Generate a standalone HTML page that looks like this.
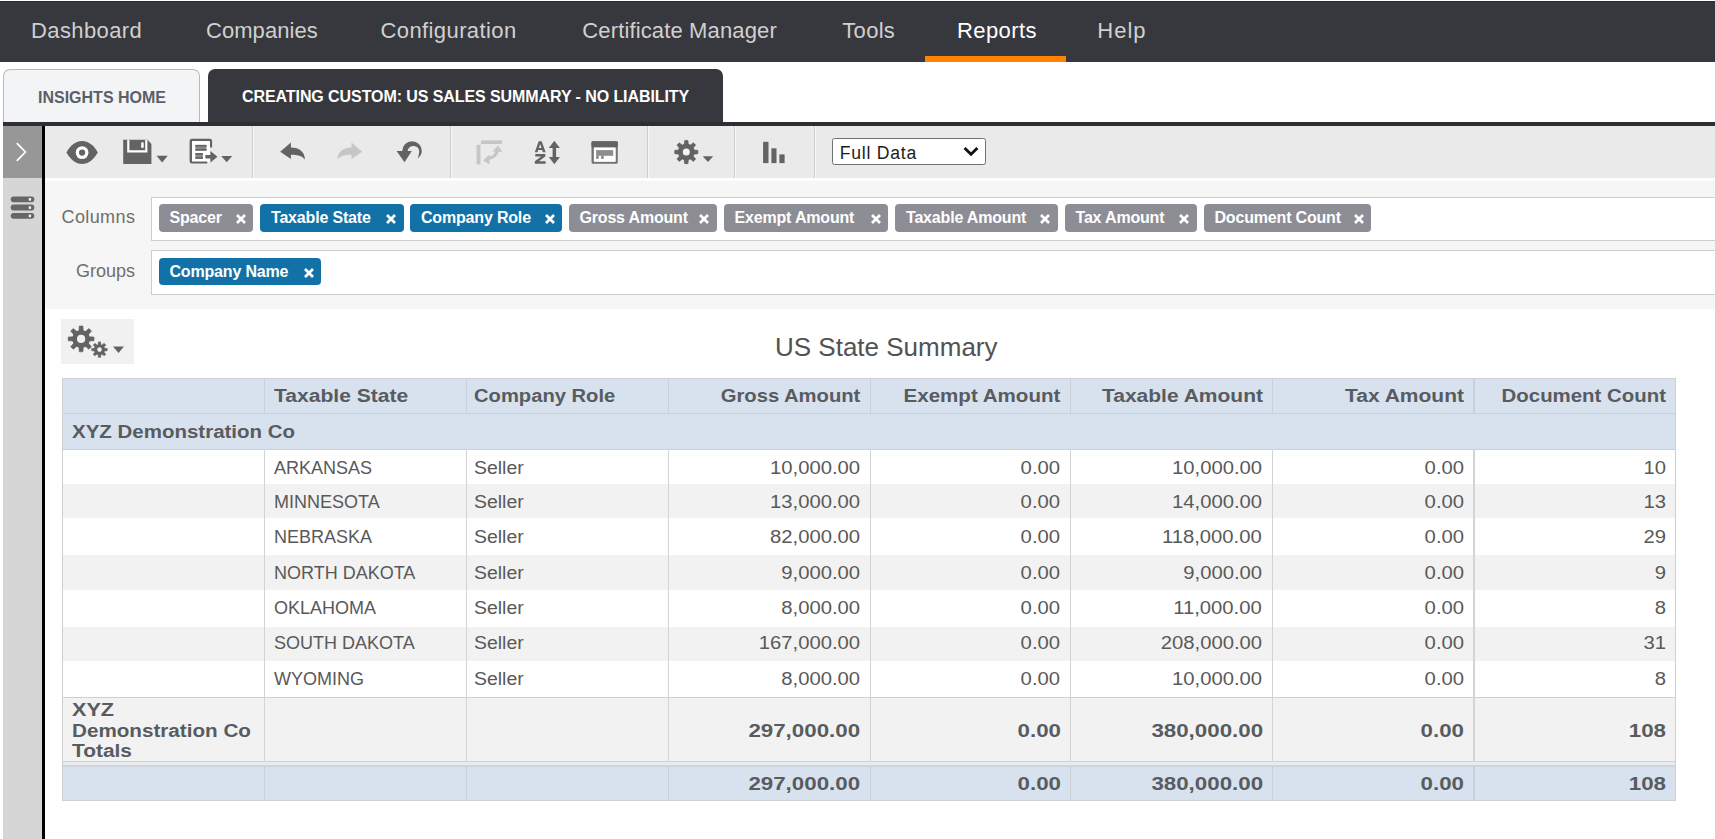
<!DOCTYPE html>
<html><head><meta charset="utf-8">
<style>
*{margin:0;padding:0;box-sizing:border-box}
html,body{width:1715px;height:839px;overflow:hidden;background:#fff;font-family:"Liberation Sans",sans-serif}
.a{position:absolute}
#nav{left:0;top:1px;width:1715px;height:61px;background:#37383d;border-top:1px solid #2a2b2f}
.ni{position:absolute;top:18px;font-size:22px;color:#d0d0d0;white-space:nowrap;line-height:26px;letter-spacing:0.4px}
#orange{left:925px;top:56px;width:141px;height:6px;background:#fe8204}
.tab{position:absolute;top:69px;height:54px;border-radius:7px 7px 0 0;white-space:nowrap;font-weight:bold;font-size:16px;line-height:20px}
#tab1{left:3px;width:197px;background:#f3f4f6;border:1.4px solid #b9b9b9;border-bottom:none;color:#5b5e68}
#tab2{left:208px;width:515px;background:#37383d;color:#fff;letter-spacing:-0.08px}
#darkbar{left:3px;top:122px;width:1712px;height:4px;background:#2e2f33}
#sbtop{left:3px;top:126px;width:39px;height:52px;background:#979797}
#sbbot{left:3px;top:178px;width:39px;height:661px;background:#d6d6d6}
#blk{left:42px;top:126px;width:3px;height:713px;background:#000}
#tool{left:45px;top:126px;width:1670px;height:52px;background:#eaeaea}
.sep{position:absolute;top:126px;width:1px;height:52px;background:#cdcdcd}
#filt{left:45px;top:178px;width:1670px;height:131px;background:#f6f6f6;border-top:3px solid #fff}
.lbl{position:absolute;font-size:18px;color:#6e6e6e;white-space:nowrap;line-height:20px}
.box{position:absolute;left:150.5px;width:1570px;background:#fff;border:1.2px solid #cdcdcd}
.chip{position:absolute;top:204px;height:27.6px;border-radius:4px;color:#fff;font-weight:bold;font-size:16px;letter-spacing:-0.18px;line-height:28.8px;white-space:nowrap;padding-left:11px}
.g{background:#8d8d95}.b{background:#1271a6}
.chip svg{position:absolute;top:10px}
#gearbtn{left:61px;top:319px;width:73px;height:45px;background:#f1f1f1}
#title{left:775px;top:331px;font-size:26px;color:#525252;white-space:nowrap;line-height:32px}
table{position:absolute;left:62px;top:378px;border-collapse:collapse;table-layout:fixed}
td,th{border:1px solid #cfd3d7;font-size:18px;color:#4e4e4e;white-space:nowrap;padding:0 9px;overflow:hidden}
th{font-weight:bold;color:#50555c;background:#d9e3ee;letter-spacing:1.3px;height:35px}
.r{text-align:right}
.l{text-align:left}
.num{letter-spacing:1.1px}
.t{position:absolute;white-space:nowrap;font-size:18px;line-height:20px}
.hb{font-weight:bold;color:#585b60}
.rg{color:#595959}
</style></head><body>
<div id="nav" class="a"></div>
<div class="ni" style="left:31px">Dashboard</div>
<div class="ni" style="left:206px;letter-spacing:0.05px">Companies</div>
<div class="ni" style="left:380.5px">Configuration</div>
<div class="ni" style="left:582.3px;letter-spacing:0.14px">Certificate Manager</div>
<div class="ni" style="left:842.3px;letter-spacing:0.3px">Tools</div>
<div class="ni" style="left:957px;color:#fff">Reports</div>
<div class="ni" style="left:1097.3px;letter-spacing:1px">Help</div>
<div id="orange" class="a"></div>

<div id="tab1" class="tab"><span class="a" style="left:34px;top:18px">INSIGHTS HOME</span></div>
<div id="tab2" class="tab"><span class="a" style="left:34px;top:18px">CREATING CUSTOM: US SALES SUMMARY - NO LIABILITY</span></div>
<div id="darkbar" class="a"></div>
<div id="sbtop" class="a"></div>
<div id="sbbot" class="a"></div>
<div id="blk" class="a"></div>
<div id="tool" class="a"></div>
<div class="sep" style="left:252px"></div>
<div class="sep" style="left:450px"></div>
<div class="sep" style="left:647px"></div>
<div class="sep" style="left:734px"></div>
<div class="sep" style="left:814px"></div>
<div id="filt" class="a"></div>
<div class="lbl" style="left:61.5px;top:207px;letter-spacing:0.4px">Columns</div>
<div class="lbl" style="left:76px;top:261px">Groups</div>
<div class="box" style="top:197px;height:44px"></div>
<div class="box" style="top:250px;height:45px"></div>

<div id="gearbtn" class="a"></div>
<div id="title" class="a">US State Summary</div>
<div class="a" style="left:62px;top:378px;width:1613.2px;height:71px;background:#d7e2ee;"></div>
<div class="a" style="left:62px;top:449px;width:1613.2px;height:35px;background:#ffffff;"></div>
<div class="a" style="left:62px;top:484px;width:1613.2px;height:34.299999999999955px;background:#f2f2f2;"></div>
<div class="a" style="left:62px;top:518.3px;width:1613.2px;height:36.700000000000045px;background:#ffffff;"></div>
<div class="a" style="left:62px;top:555px;width:1613.2px;height:34.5px;background:#f2f2f2;"></div>
<div class="a" style="left:62px;top:589.5px;width:1613.2px;height:37.0px;background:#ffffff;"></div>
<div class="a" style="left:62px;top:626.5px;width:1613.2px;height:34.5px;background:#f2f2f2;"></div>
<div class="a" style="left:62px;top:661px;width:1613.2px;height:36.39999999999998px;background:#ffffff;"></div>
<div class="a" style="left:62px;top:697.4px;width:1613.2px;height:64.10000000000002px;background:#f2f2f2;"></div>
<div class="a" style="left:62px;top:762px;width:1613.2px;height:3.3999999999999773px;background:#e8ecf0;"></div>
<div class="a" style="left:62px;top:765.4px;width:1613.2px;height:35.10000000000002px;background:#d7e2ee;"></div>
<div class="a" style="left:62px;top:378px;width:1613.2px;height:1.2px;background:#cdd1d6;"></div>
<div class="a" style="left:62px;top:412.8px;width:1613.2px;height:1.2px;background:#cdd1d6;"></div>
<div class="a" style="left:62px;top:448.8px;width:1613.2px;height:1.2px;background:#cdd1d6;"></div>
<div class="a" style="left:62px;top:697.2px;width:1613.2px;height:1.2px;background:#cdd1d6;"></div>
<div class="a" style="left:62px;top:761.2px;width:1613.2px;height:1.2px;background:#cdd1d6;"></div>
<div class="a" style="left:62px;top:800px;width:1613.2px;height:1.2px;background:#cdd1d6;"></div>
<div class="a" style="left:62px;top:765.4px;width:1613.2px;height:2px;background:#ced4da;"></div>
<div class="a" style="left:62px;top:378px;width:1.2px;height:422.5px;background:#cdd1d6;"></div>
<div class="a" style="left:263.5px;top:378px;width:1.2px;height:35px;background:#c9d0d8;"></div>
<div class="a" style="left:263.5px;top:449px;width:1.2px;height:312.5px;background:#d4d4d4;"></div>
<div class="a" style="left:263.5px;top:766.5px;width:1.2px;height:34.0px;background:#c9d0d8;"></div>
<div class="a" style="left:466px;top:378px;width:1.2px;height:35px;background:#c9d0d8;"></div>
<div class="a" style="left:466px;top:449px;width:1.2px;height:312.5px;background:#d4d4d4;"></div>
<div class="a" style="left:466px;top:766.5px;width:1.2px;height:34.0px;background:#c9d0d8;"></div>
<div class="a" style="left:668px;top:378px;width:1.2px;height:35px;background:#c9d0d8;"></div>
<div class="a" style="left:668px;top:449px;width:1.2px;height:312.5px;background:#d4d4d4;"></div>
<div class="a" style="left:668px;top:766.5px;width:1.2px;height:34.0px;background:#c9d0d8;"></div>
<div class="a" style="left:869.5px;top:378px;width:1.2px;height:35px;background:#c9d0d8;"></div>
<div class="a" style="left:869.5px;top:449px;width:1.2px;height:312.5px;background:#d4d4d4;"></div>
<div class="a" style="left:869.5px;top:766.5px;width:1.2px;height:34.0px;background:#c9d0d8;"></div>
<div class="a" style="left:1069.6px;top:378px;width:1.2px;height:35px;background:#c9d0d8;"></div>
<div class="a" style="left:1069.6px;top:449px;width:1.2px;height:312.5px;background:#d4d4d4;"></div>
<div class="a" style="left:1069.6px;top:766.5px;width:1.2px;height:34.0px;background:#c9d0d8;"></div>
<div class="a" style="left:1271.6px;top:378px;width:1.2px;height:35px;background:#c9d0d8;"></div>
<div class="a" style="left:1271.6px;top:449px;width:1.2px;height:312.5px;background:#d4d4d4;"></div>
<div class="a" style="left:1271.6px;top:766.5px;width:1.2px;height:34.0px;background:#c9d0d8;"></div>
<div class="a" style="left:1473.4px;top:378px;width:1.2px;height:35px;background:#c9d0d8;"></div>
<div class="a" style="left:1473.4px;top:449px;width:1.2px;height:312.5px;background:#d4d4d4;"></div>
<div class="a" style="left:1473.4px;top:766.5px;width:1.2px;height:34.0px;background:#c9d0d8;"></div>
<div class="a" style="left:1675.2px;top:378px;width:1.2px;height:422.5px;background:#cdd1d6;"></div>
<div class="t hb" style="left:274.0px;top:386.3px;transform:scaleX(1.171);transform-origin:left">Taxable State</div>
<div class="t hb" style="left:474.3px;top:386.3px;transform:scaleX(1.121);transform-origin:left">Company Role</div>
<div class="t hb" style="right:854.5px;top:386.3px;transform:scaleX(1.123);transform-origin:right">Gross Amount</div>
<div class="t hb" style="right:654.4000000000001px;top:386.3px;transform:scaleX(1.142);transform-origin:right">Exempt Amount</div>
<div class="t hb" style="right:452.4000000000001px;top:386.3px;transform:scaleX(1.167);transform-origin:right">Taxable Amount</div>
<div class="t hb" style="right:250.5999999999999px;top:386.3px;transform:scaleX(1.167);transform-origin:right">Tax Amount</div>
<div class="t hb" style="right:48.799999999999955px;top:386.3px;transform:scaleX(1.134);transform-origin:right">Document Count</div>
<div class="t hb" style="left:71.5px;top:421.7px;transform:scaleX(1.138);transform-origin:left">XYZ Demonstration Co</div>
<div class="t rg" style="left:274.0px;top:457.7px">ARKANSAS</div>
<div class="t rg" style="left:474.3px;top:457.7px;transform:scaleX(1.08);transform-origin:left">Seller</div>
<div class="t rg" style="right:855.0px;top:457.7px;transform:scaleX(1.125);transform-origin:right">10,000.00</div>
<div class="t rg" style="right:654.9000000000001px;top:457.7px;transform:scaleX(1.125);transform-origin:right">0.00</div>
<div class="t rg" style="right:452.9000000000001px;top:457.7px;transform:scaleX(1.125);transform-origin:right">10,000.00</div>
<div class="t rg" style="right:251.0999999999999px;top:457.7px;transform:scaleX(1.125);transform-origin:right">0.00</div>
<div class="t rg" style="right:49.299999999999955px;top:457.7px;transform:scaleX(1.125);transform-origin:right">10</div>
<div class="t rg" style="left:274.0px;top:491.5px">MINNESOTA</div>
<div class="t rg" style="left:474.3px;top:491.5px;transform:scaleX(1.08);transform-origin:left">Seller</div>
<div class="t rg" style="right:855.0px;top:491.5px;transform:scaleX(1.125);transform-origin:right">13,000.00</div>
<div class="t rg" style="right:654.9000000000001px;top:491.5px;transform:scaleX(1.125);transform-origin:right">0.00</div>
<div class="t rg" style="right:452.9000000000001px;top:491.5px;transform:scaleX(1.125);transform-origin:right">14,000.00</div>
<div class="t rg" style="right:251.0999999999999px;top:491.5px;transform:scaleX(1.125);transform-origin:right">0.00</div>
<div class="t rg" style="right:49.299999999999955px;top:491.5px;transform:scaleX(1.125);transform-origin:right">13</div>
<div class="t rg" style="left:274.0px;top:526.7px">NEBRASKA</div>
<div class="t rg" style="left:474.3px;top:526.7px;transform:scaleX(1.08);transform-origin:left">Seller</div>
<div class="t rg" style="right:855.0px;top:526.7px;transform:scaleX(1.125);transform-origin:right">82,000.00</div>
<div class="t rg" style="right:654.9000000000001px;top:526.7px;transform:scaleX(1.125);transform-origin:right">0.00</div>
<div class="t rg" style="right:452.9000000000001px;top:526.7px;transform:scaleX(1.125);transform-origin:right">118,000.00</div>
<div class="t rg" style="right:251.0999999999999px;top:526.7px;transform:scaleX(1.125);transform-origin:right">0.00</div>
<div class="t rg" style="right:49.299999999999955px;top:526.7px;transform:scaleX(1.125);transform-origin:right">29</div>
<div class="t rg" style="left:274.0px;top:562.5px">NORTH DAKOTA</div>
<div class="t rg" style="left:474.3px;top:562.5px;transform:scaleX(1.08);transform-origin:left">Seller</div>
<div class="t rg" style="right:855.0px;top:562.5px;transform:scaleX(1.125);transform-origin:right">9,000.00</div>
<div class="t rg" style="right:654.9000000000001px;top:562.5px;transform:scaleX(1.125);transform-origin:right">0.00</div>
<div class="t rg" style="right:452.9000000000001px;top:562.5px;transform:scaleX(1.125);transform-origin:right">9,000.00</div>
<div class="t rg" style="right:251.0999999999999px;top:562.5px;transform:scaleX(1.125);transform-origin:right">0.00</div>
<div class="t rg" style="right:49.299999999999955px;top:562.5px;transform:scaleX(1.125);transform-origin:right">9</div>
<div class="t rg" style="left:274.0px;top:598.2px">OKLAHOMA</div>
<div class="t rg" style="left:474.3px;top:598.2px;transform:scaleX(1.08);transform-origin:left">Seller</div>
<div class="t rg" style="right:855.0px;top:598.2px;transform:scaleX(1.125);transform-origin:right">8,000.00</div>
<div class="t rg" style="right:654.9000000000001px;top:598.2px;transform:scaleX(1.125);transform-origin:right">0.00</div>
<div class="t rg" style="right:452.9000000000001px;top:598.2px;transform:scaleX(1.125);transform-origin:right">11,000.00</div>
<div class="t rg" style="right:251.0999999999999px;top:598.2px;transform:scaleX(1.125);transform-origin:right">0.00</div>
<div class="t rg" style="right:49.299999999999955px;top:598.2px;transform:scaleX(1.125);transform-origin:right">8</div>
<div class="t rg" style="left:274.0px;top:633.45px">SOUTH DAKOTA</div>
<div class="t rg" style="left:474.3px;top:633.45px;transform:scaleX(1.08);transform-origin:left">Seller</div>
<div class="t rg" style="right:855.0px;top:633.45px;transform:scaleX(1.125);transform-origin:right">167,000.00</div>
<div class="t rg" style="right:654.9000000000001px;top:633.45px;transform:scaleX(1.125);transform-origin:right">0.00</div>
<div class="t rg" style="right:452.9000000000001px;top:633.45px;transform:scaleX(1.125);transform-origin:right">208,000.00</div>
<div class="t rg" style="right:251.0999999999999px;top:633.45px;transform:scaleX(1.125);transform-origin:right">0.00</div>
<div class="t rg" style="right:49.299999999999955px;top:633.45px;transform:scaleX(1.125);transform-origin:right">31</div>
<div class="t rg" style="left:274.0px;top:669.2px">WYOMING</div>
<div class="t rg" style="left:474.3px;top:669.2px;transform:scaleX(1.08);transform-origin:left">Seller</div>
<div class="t rg" style="right:855.0px;top:669.2px;transform:scaleX(1.125);transform-origin:right">8,000.00</div>
<div class="t rg" style="right:654.9000000000001px;top:669.2px;transform:scaleX(1.125);transform-origin:right">0.00</div>
<div class="t rg" style="right:452.9000000000001px;top:669.2px;transform:scaleX(1.125);transform-origin:right">10,000.00</div>
<div class="t rg" style="right:251.0999999999999px;top:669.2px;transform:scaleX(1.125);transform-origin:right">0.00</div>
<div class="t rg" style="right:49.299999999999955px;top:669.2px;transform:scaleX(1.125);transform-origin:right">8</div>
<div class="t hb" style="left:71.5px;top:699.7px;transform:scaleX(1.2);transform-origin:left">XYZ</div>
<div class="t hb" style="left:71.5px;top:720.7px;transform:scaleX(1.147);transform-origin:left">Demonstration Co</div>
<div class="t hb" style="left:71.5px;top:741.2px;transform:scaleX(1.16);transform-origin:left">Totals</div>
<div class="t hb" style="right:854.5px;top:720.6px;transform:scaleX(1.24);transform-origin:right">297,000.00</div>
<div class="t hb" style="right:854.5px;top:774.1px;transform:scaleX(1.24);transform-origin:right">297,000.00</div>
<div class="t hb" style="right:654.4000000000001px;top:720.6px;transform:scaleX(1.24);transform-origin:right">0.00</div>
<div class="t hb" style="right:654.4000000000001px;top:774.1px;transform:scaleX(1.24);transform-origin:right">0.00</div>
<div class="t hb" style="right:452.4000000000001px;top:720.6px;transform:scaleX(1.24);transform-origin:right">380,000.00</div>
<div class="t hb" style="right:452.4000000000001px;top:774.1px;transform:scaleX(1.24);transform-origin:right">380,000.00</div>
<div class="t hb" style="right:250.5999999999999px;top:720.6px;transform:scaleX(1.24);transform-origin:right">0.00</div>
<div class="t hb" style="right:250.5999999999999px;top:774.1px;transform:scaleX(1.24);transform-origin:right">0.00</div>
<div class="t hb" style="right:48.799999999999955px;top:720.6px;transform:scaleX(1.24);transform-origin:right">108</div>
<div class="t hb" style="right:48.799999999999955px;top:774.1px;transform:scaleX(1.24);transform-origin:right">108</div>
<div class="chip g" style="left:158.5px;top:204.1px;width:94.5px">Spacer<svg width="10" height="10" viewBox="0 0 10 10" style="position:absolute;right:7.5px;top:10.3px"><path d="M1 1L9 9M9 1L1 9" stroke="#fff" stroke-width="2.7" stroke-linecap="butt"/></svg></div>
<div class="chip b" style="left:260px;top:204.1px;width:143.5px">Taxable State<svg width="10" height="10" viewBox="0 0 10 10" style="position:absolute;right:7.5px;top:10.3px"><path d="M1 1L9 9M9 1L1 9" stroke="#fff" stroke-width="2.7" stroke-linecap="butt"/></svg></div>
<div class="chip b" style="left:410px;top:204.1px;width:152px">Company Role<svg width="10" height="10" viewBox="0 0 10 10" style="position:absolute;right:7.5px;top:10.3px"><path d="M1 1L9 9M9 1L1 9" stroke="#fff" stroke-width="2.7" stroke-linecap="butt"/></svg></div>
<div class="chip g" style="left:568.5px;top:204.1px;width:148.0px">Gross Amount<svg width="10" height="10" viewBox="0 0 10 10" style="position:absolute;right:7.5px;top:10.3px"><path d="M1 1L9 9M9 1L1 9" stroke="#fff" stroke-width="2.7" stroke-linecap="butt"/></svg></div>
<div class="chip g" style="left:723.5px;top:204.1px;width:164.5px">Exempt Amount<svg width="10" height="10" viewBox="0 0 10 10" style="position:absolute;right:7.5px;top:10.3px"><path d="M1 1L9 9M9 1L1 9" stroke="#fff" stroke-width="2.7" stroke-linecap="butt"/></svg></div>
<div class="chip g" style="left:895px;top:204.1px;width:162.5px">Taxable Amount<svg width="10" height="10" viewBox="0 0 10 10" style="position:absolute;right:7.5px;top:10.3px"><path d="M1 1L9 9M9 1L1 9" stroke="#fff" stroke-width="2.7" stroke-linecap="butt"/></svg></div>
<div class="chip g" style="left:1064.5px;top:204.1px;width:132.0px">Tax Amount<svg width="10" height="10" viewBox="0 0 10 10" style="position:absolute;right:7.5px;top:10.3px"><path d="M1 1L9 9M9 1L1 9" stroke="#fff" stroke-width="2.7" stroke-linecap="butt"/></svg></div>
<div class="chip g" style="left:1203.5px;top:204.1px;width:167.5px">Document Count<svg width="10" height="10" viewBox="0 0 10 10" style="position:absolute;right:7.5px;top:10.3px"><path d="M1 1L9 9M9 1L1 9" stroke="#fff" stroke-width="2.7" stroke-linecap="butt"/></svg></div>
<div class="chip b" style="left:158.5px;top:257.7px;width:162.5px">Company Name<svg width="10" height="10" viewBox="0 0 10 10" style="position:absolute;right:7.5px;top:10.3px"><path d="M1 1L9 9M9 1L1 9" stroke="#fff" stroke-width="2.7" stroke-linecap="butt"/></svg></div>
<svg class="a" style="left:0;top:0" width="1715" height="839" viewBox="0 0 1715 839">
<rect x="253" y="126" width="1" height="52" fill="#f7f7f7"/>
<rect x="451" y="126" width="1" height="52" fill="#f7f7f7"/>
<rect x="648" y="126" width="1" height="52" fill="#f7f7f7"/>
<rect x="735" y="126" width="1" height="52" fill="#f7f7f7"/>
<rect x="815" y="126" width="1" height="52" fill="#f7f7f7"/>
<path d="M16.8 143.2 L25.4 152 L16.8 160.8" fill="none" stroke="#fff" stroke-width="1.7"/>
<rect x="10.7" y="196.4" width="23.6" height="5.8" rx="2.9" fill="#666"/>
<rect x="28.7" y="198.0" width="2.4" height="2.7" rx="0.6" fill="#f0f0f0"/>
<rect x="10.7" y="204.6" width="23.6" height="5.8" rx="2.9" fill="#666"/>
<rect x="28.7" y="206.2" width="2.4" height="2.7" rx="0.6" fill="#f0f0f0"/>
<rect x="10.7" y="212.9" width="23.6" height="5.8" rx="2.9" fill="#666"/>
<rect x="28.7" y="214.5" width="2.4" height="2.7" rx="0.6" fill="#f0f0f0"/>
<path d="M66.4 152.5 C70.5 145.2 76 141.1 82.1 141.1 C88.2 141.1 93.7 145.2 97.8 152.5 C93.7 159.8 88.2 163.9 82.1 163.9 C76 163.9 70.5 159.8 66.4 152.5 Z" fill="#636363"/>
<circle cx="82.1" cy="152.6" r="6.4" fill="#fff"/>
<circle cx="82.1" cy="152.6" r="3.1" fill="#636363"/>
<path d="M123.2 139.8 L147.6 139.8 L151.4 144 L151.4 163.9 L123.2 163.9 Z" fill="#636363"/>
<path d="M127.2 139.8 L129.4 139.8 L129.4 150.2 L145.2 150.2 L145.2 139.8 L147.4 139.8 L147.4 152.4 L127.2 152.4 Z" fill="#fff"/>
<rect x="141.2" y="142.4" width="2.5" height="5.4" fill="#fff"/>
<path d="M156.5 155.8 L167.8 155.8 L162.15 162.6 Z" fill="#636363"/>
<path d="M207.3 163.6 L192 163.6 Q189.7 163.6 189.7 161.3 L189.7 141 Q189.7 138.7 192 138.7 L209.7 138.7 Q212 138.7 212 141 L212 147.5" fill="none" stroke="#636363" stroke-width="0"/>
<path d="M191.9 138.7 L209.8 138.7 Q212.1 138.7 212.1 141 L212.1 147.5 L209.8 147.5 L209.8 141 L192.1 141 L192.1 161.3 L207.3 161.3 L207.3 163.6 L191.9 163.6 Q189.6 163.6 189.6 161.3 L189.6 141 Q189.6 138.7 191.9 138.7 Z" fill="#636363"/>
<rect x="192" y="141" width="17.9" height="20.4" fill="#fff"/><rect x="207" y="147.5" width="3" height="14" fill="#fff"/>
<rect x="195.4" y="144.9" width="11.1" height="5.7" fill="#8a8a8a"/>
<rect x="195.4" y="144.9" width="11.1" height="1.6" fill="#636363"/><rect x="195.4" y="149" width="11.1" height="1.6" fill="#636363"/>
<rect x="195.4" y="153" width="7.5" height="5.8" fill="#8a8a8a"/>
<rect x="195.4" y="153" width="7.5" height="1.6" fill="#636363"/><rect x="195.4" y="157.2" width="7.5" height="1.6" fill="#636363"/>
<path d="M205.4 155 L210.4 155 L210.4 151 L217.5 156.8 L210.4 162.5 L210.4 158.6 L205.4 158.6 Z" fill="#636363"/>
<path d="M221.2 155.9 L232.2 155.9 L226.7 162.3 Z" fill="#636363"/>
<path d="M280.2 151.7 L290.9 142.5 L290.9 147.6 C299.5 147.6 304.5 152 305 159.4 C301.5 155.6 297.5 154.7 290.9 154.7 L290.9 159 Z" fill="#636363"/>
<path d="M280.2 151.7 L290.9 142.5 L290.9 147.6 C299.5 147.6 304.5 152 305 159.4 C301.5 155.6 297.5 154.7 290.9 154.7 L290.9 159 Z" fill="#c6c6c6" transform="translate(642.4 0) scale(-1 1)"/>
<path d="M396.6 151 L404.5 162.3 L411.8 151 L407.6 151 A5.7 5.4 0 0 1 419.2 151.8 Q419 155.5 417.6 158.4 Q421.8 155.2 421.8 151 A9.7 9.8 0 0 0 402.3 151 Z" fill="#636363"/>
<rect x="481.1" y="140.4" width="20.8" height="3.6" fill="#c6c6c6"/>
<rect x="476.6" y="144.9" width="3.9" height="19.4" fill="#c6c6c6"/>
<path d="M487 158.6 Q496.6 158 497.4 149.2" fill="none" stroke="#c6c6c6" stroke-width="3.1"/>
<path d="M492.6 151.4 L498 145.4 L502.4 152 Z" fill="#c6c6c6"/><path d="M489.2 154.6 L483.2 160.4 L489.6 164.4 Z" fill="#c6c6c6"/>
<path d="M534.8 152.3 L538.7 141.3 L541.7 141.3 L545.6 152.3 L542.9 152.3 L542.2 150.1 L538.2 150.1 L537.5 152.3 Z M538.9 147.9 L541.5 147.9 L540.2 143.9 Z" fill="#636363" fill-rule="evenodd"/>
<path d="M535.3 154 L545.3 154 L545.3 156.4 L538.9 161.3 L545.6 161.3 L545.6 163.7 L534.8 163.7 L534.8 161.3 L541.2 156.4 L535.3 156.4 Z" fill="#636363"/>
<path d="M554.35 140.7 L559.9 148 L556.1 148 L556.1 157 L559.9 157 L554.35 164.3 L548.8 157 L552.6 157 L552.6 148 L548.8 148 Z" fill="#636363"/>
<path d="M593 141.3 L616.3 141.3 Q617.8 141.3 617.8 142.8 L617.8 162.2 Q617.8 163.7 616.3 163.7 L593 163.7 Q591.5 163.7 591.5 162.2 L591.5 142.8 Q591.5 141.3 593 141.3 Z M593.8 147.5 L593.8 161.8 L615.6 161.8 L615.6 147.5 Z" fill="#737373" fill-rule="evenodd"/><rect x="591.5" y="141.3" width="26.3" height="6.2" rx="1" fill="#636363"/>
<rect x="594" y="147.5" width="21.5" height="14.1" fill="#fff"/><rect x="596.1" y="150.1" width="17.1" height="5.7" fill="#8c8c8c"/><rect x="596.1" y="155.6" width="2.6" height="3.3" fill="#8c8c8c"/><rect x="601" y="155.6" width="2.7" height="3.3" fill="#8c8c8c"/>
<circle cx="686.3" cy="152.05" r="8.4" fill="#636363"/><path d="M688.40 145.15 L688.00 140.45 L684.60 140.45 L684.20 145.15 Z" fill="#636363" stroke="#636363" stroke-width="0.6" stroke-linejoin="round"/><path d="M692.66 148.66 L695.70 145.05 L693.30 142.65 L689.69 145.69 Z" fill="#636363" stroke="#636363" stroke-width="0.6" stroke-linejoin="round"/><path d="M693.20 154.15 L697.90 153.75 L697.90 150.35 L693.20 149.95 Z" fill="#636363" stroke="#636363" stroke-width="0.6" stroke-linejoin="round"/><path d="M689.69 158.41 L693.30 161.45 L695.70 159.05 L692.66 155.44 Z" fill="#636363" stroke="#636363" stroke-width="0.6" stroke-linejoin="round"/><path d="M684.20 158.95 L684.60 163.65 L688.00 163.65 L688.40 158.95 Z" fill="#636363" stroke="#636363" stroke-width="0.6" stroke-linejoin="round"/><path d="M679.94 155.44 L676.90 159.05 L679.30 161.45 L682.91 158.41 Z" fill="#636363" stroke="#636363" stroke-width="0.6" stroke-linejoin="round"/><path d="M679.40 149.95 L674.70 150.35 L674.70 153.75 L679.40 154.15 Z" fill="#636363" stroke="#636363" stroke-width="0.6" stroke-linejoin="round"/><path d="M682.91 145.69 L679.30 142.65 L676.90 145.05 L679.94 148.66 Z" fill="#636363" stroke="#636363" stroke-width="0.6" stroke-linejoin="round"/><circle cx="686.3" cy="152.05" r="3.5" fill="#f4f4f4"/>
<path d="M702.7 156.2 L713.2 156.2 L707.95 162 Z" fill="#636363"/>
<rect x="763.1" y="141.8" width="5.4" height="21.3" fill="#636363"/><rect x="771.4" y="148.3" width="5.1" height="14.8" fill="#636363"/><rect x="779.4" y="154.4" width="5.2" height="8.7" fill="#636363"/>
<circle cx="81.1" cy="338.9" r="8.9" fill="#636363"/><path d="M83.30 331.50 L82.95 326.00 L79.25 326.00 L78.90 331.50 Z" fill="#636363" stroke="#636363" stroke-width="0.6" stroke-linejoin="round"/><path d="M87.89 335.22 L91.53 331.09 L88.91 328.47 L84.78 332.11 Z" fill="#636363" stroke="#636363" stroke-width="0.6" stroke-linejoin="round"/><path d="M88.50 341.10 L94.00 340.75 L94.00 337.05 L88.50 336.70 Z" fill="#636363" stroke="#636363" stroke-width="0.6" stroke-linejoin="round"/><path d="M84.78 345.69 L88.91 349.33 L91.53 346.71 L87.89 342.58 Z" fill="#636363" stroke="#636363" stroke-width="0.6" stroke-linejoin="round"/><path d="M78.90 346.30 L79.25 351.80 L82.95 351.80 L83.30 346.30 Z" fill="#636363" stroke="#636363" stroke-width="0.6" stroke-linejoin="round"/><path d="M74.31 342.58 L70.67 346.71 L73.29 349.33 L77.42 345.69 Z" fill="#636363" stroke="#636363" stroke-width="0.6" stroke-linejoin="round"/><path d="M73.70 336.70 L68.20 337.05 L68.20 340.75 L73.70 341.10 Z" fill="#636363" stroke="#636363" stroke-width="0.6" stroke-linejoin="round"/><path d="M77.42 332.11 L73.29 328.47 L70.67 331.09 L74.31 335.22 Z" fill="#636363" stroke="#636363" stroke-width="0.6" stroke-linejoin="round"/><circle cx="81.1" cy="338.9" r="4.1" fill="#f1f1f1"/>
<circle cx="99.5" cy="349.6" r="5.4" fill="#636363"/><path d="M100.90 345.70 L100.65 341.90 L98.35 341.90 L98.10 345.70 Z" fill="#636363" stroke="#636363" stroke-width="0.6" stroke-linejoin="round"/><path d="M103.25 347.83 L105.76 344.97 L104.13 343.34 L101.27 345.85 Z" fill="#636363" stroke="#636363" stroke-width="0.6" stroke-linejoin="round"/><path d="M103.40 351.00 L107.20 350.75 L107.20 348.45 L103.40 348.20 Z" fill="#636363" stroke="#636363" stroke-width="0.6" stroke-linejoin="round"/><path d="M101.27 353.35 L104.13 355.86 L105.76 354.23 L103.25 351.37 Z" fill="#636363" stroke="#636363" stroke-width="0.6" stroke-linejoin="round"/><path d="M98.10 353.50 L98.35 357.30 L100.65 357.30 L100.90 353.50 Z" fill="#636363" stroke="#636363" stroke-width="0.6" stroke-linejoin="round"/><path d="M95.75 351.37 L93.24 354.23 L94.87 355.86 L97.73 353.35 Z" fill="#636363" stroke="#636363" stroke-width="0.6" stroke-linejoin="round"/><path d="M95.60 348.20 L91.80 348.45 L91.80 350.75 L95.60 351.00 Z" fill="#636363" stroke="#636363" stroke-width="0.6" stroke-linejoin="round"/><path d="M97.73 345.85 L94.87 343.34 L93.24 344.97 L95.75 347.83 Z" fill="#636363" stroke="#636363" stroke-width="0.6" stroke-linejoin="round"/><circle cx="99.5" cy="349.6" r="2.3" fill="#f1f1f1"/>
<path d="M113 346.5 L124 346.5 L118.5 353 Z" fill="#636363"/>
</svg>
<div class="a" style="left:832px;top:138.2px;width:154px;height:26.7px;background:#fff;border:1.4px solid #727272;border-radius:2.5px"></div>
<div class="a" style="left:839.8px;top:143px;font-size:17.6px;line-height:20px;letter-spacing:0.75px;color:#1c1c1c;white-space:nowrap">Full Data</div>
<svg class="a" style="left:960px;top:143px" width="22" height="16"><path d="M4.6 5 L11 11.2 L17.4 5" fill="none" stroke="#111" stroke-width="2.9"/></svg>
</body></html>
